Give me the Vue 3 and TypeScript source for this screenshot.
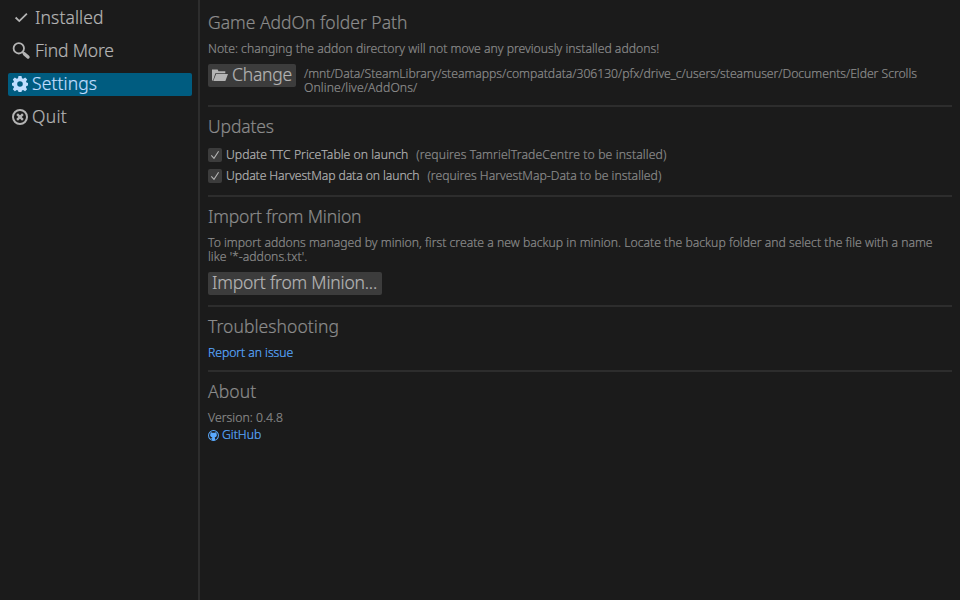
<script setup lang="ts">
import { ref } from 'vue'

type Page = 'installed' | 'find' | 'settings' | 'quit'

const pages: { id: Page; label: string }[] = [
  { id: 'installed', label: 'Installed' },
  { id: 'find', label: 'Find More' },
  { id: 'settings', label: 'Settings' },
  { id: 'quit', label: 'Quit' },
]
const current = ref<Page>('settings')

const updates = ref([
  { id: 'ttc', label: 'Update TTC PriceTable on launch', note: '(requires TamrielTradeCentre to be installed)', on: true },
  { id: 'harvest', label: 'Update HarvestMap data on launch', note: '(requires HarvestMap-Data to be installed)', on: true },
])
</script>

<template>
  <div class="app">
    <nav class="sidebar">
      <button
        v-for="p in pages"
        :key="p.id"
        class="nav"
        :class="[p.id, { active: p.id === current }]"
        @click="current = p.id"
      >
        <svg v-if="p.id === 'installed'" class="icon wide" viewBox="0 0 19 18">
          <path d="M3.6 8.5 7.3 12.1 14.9 4.6" fill="none" stroke="currentColor" stroke-width="1.8" />
        </svg>
        <svg v-else-if="p.id === 'find'" class="icon wide" viewBox="0 0 19 18">
          <circle cx="6.8" cy="6.3" r="5.2" fill="none" stroke="currentColor" stroke-width="1.8" />
          <path d="M10.4 10 12 11.6" stroke="currentColor" stroke-width="1.8" />
          <path d="M12.5 11.9 16 15" stroke="currentColor" stroke-width="3.4" stroke-linecap="round" />
        </svg>
        <svg v-else-if="p.id === 'settings'" class="icon" viewBox="0 0 16 16">
          <path
            fill="currentColor"
            fill-rule="evenodd"
            d="M6.5 0h3l.5 2.2 1.2.5 2-1.2 2 2-1.2 2 .5 1.1 1.5.4v2.6l-1.6.5-.5 1.2 1.2 2-2 2-2-1.2-1.2.5L9.5 16h-3L6 14.6l-1.2-.5-2 1.2-2-2 1.2-2-.5-1.2L0 9.6V7l1.5-.4.5-1.1-1.2-2 2-2 2 1.2L6 2.2ZM8 5.2a2.8 2.8 0 1 0 0 5.6 2.8 2.8 0 0 0 0-5.6Z"
          />
        </svg>
        <svg v-else class="icon" viewBox="0 0 16 16">
          <circle cx="8" cy="8" r="7" fill="none" stroke="currentColor" stroke-width="2" />
          <path d="M5.1 5.1 10.9 10.9M10.9 5.1 5.1 10.9" stroke="currentColor" stroke-width="2.4" />
        </svg>
        <span class="label">{{ p.label }}</span>
      </button>
    </nav>

    <main class="content">
      <section class="folder">
        <h2>Game AddOn folder Path</h2>
        <p>Note: changing the addon directory will not move any previously installed addons!</p>
        <div class="path-row">
          <button class="btn change">
            <svg class="icon" viewBox="0 0 16 16">
              <path fill="currentColor" d="M0 13.6V2.4h5.6l.9 1.8h6.8v2H3.4L1 13.6Z" />
              <path fill="currentColor" d="M4.1 7H16l-2.6 7H1.3Z" />
            </svg>
            <span class="label">Change</span>
          </button>
          <div class="path">/mnt/Data/SteamLibrary/steamapps/compatdata/306130/pfx/drive_c/users/steamuser/Documents/Elder Scrolls Online/live/AddOns/</div>
        </div>
      </section>

      <section class="updates">
        <h2>Updates</h2>
        <label v-for="u in updates" :key="u.id" class="check" :class="u.id">
          <input v-model="u.on" type="checkbox" />
          <span class="box">
            <svg v-if="u.on" viewBox="0 0 14 14">
              <path d="M3.3 7.3 6 10.4 10.6 3.3" fill="none" stroke="currentColor" stroke-width="1.1" />
            </svg>
          </span>
          <span class="name">{{ u.label }}</span>
          <span class="note">{{ u.note }}</span>
        </label>
      </section>

      <section class="import">
        <h2>Import from Minion</h2>
        <p>To import addons managed by minion, first create a new backup in minion. Locate the backup folder and select the file with a name like '*-addons.txt'.</p>
        <button class="btn minion">Import from Minion...</button>
      </section>

      <section class="trouble">
        <h2>Troubleshooting</h2>
        <a class="report">Report an issue</a>
      </section>

      <section class="about">
        <h2>About</h2>
        <p>Version: 0.4.8</p>
        <a class="github">
          <svg viewBox="0 0 12 12">
            <circle cx="6" cy="6" r="5.4" fill="none" stroke="currentColor" stroke-width="1.1" />
            <path
              fill="currentColor"
              d="M2.9 2.3 4.7 3.1H7.3L9.1 2.3 9.4 4.1C10.2 6.3 9.1 7.9 7.3 8.2L7.7 9V11.3H4.3V9.9C3.2 10 2.9 9 2.3 8.7 3.2 8.5 3.5 9.3 4.3 9.2L4.7 8.2C2.9 7.9 1.8 6.3 2.6 4.1Z"
            />
          </svg>
          <span>GitHub</span>
        </a>
      </section>
    </main>
  </div>
</template>

<style>
body {
  background: #1b1b1b;
}
</style>

<style scoped>
.app {
  display: flex;
  box-sizing: border-box;
  width: 960px;
  height: 600px;
  overflow: hidden;
  background: #1b1b1b;
  color: #8c8c8c;
  font: 300 12.2px/14px 'Noto Sans', sans-serif;
  -webkit-text-stroke: 0.2px currentColor;
}
.sidebar {
  display: flex;
  flex-direction: column;
  gap: 10px;
  box-sizing: border-box;
  width: 200px;
  padding: 7px 6px 0 8px;
  border-right: 2px solid #2d2d2d;
}
button {
  border: 0;
  border-radius: 2px;
  font: 300 17.5px/21px 'Noto Sans', sans-serif;
  color: #b4b4b4;
  white-space: nowrap;
}
.nav,
.change {
  display: flex;
  align-items: flex-start;
  gap: 4px;
  height: 23px;
  padding: 0 4px;
}
.nav {
  background: none;
}
.nav.active {
  background: #005c80;
  color: #c0deff;
}
.icon {
  width: 16px;
  height: 16px;
  margin-top: 3px;
  flex: none;
}
.icon.wide {
  width: 19px;
  height: 18px;
  margin-top: 2px;
}
.label {
  letter-spacing: 0.1px;
}
.find .label {
  letter-spacing: -0.15px;
}
.quit .label {
  letter-spacing: 0.3px;
}
.content {
  flex: 1;
  padding: 2px 8px 0;
}
section {
  box-sizing: border-box;
  padding-top: 8px;
  border-bottom: 2px solid #2d2d2d;
}
h2 {
  margin: 0 0 9px;
  font-size: 17.5px;
  font-weight: 300;
  line-height: 22px;
}
p {
  margin: 0;
}
.folder {
  height: 105px;
  padding-top: 9px;
}
.updates {
  height: 90px;
}
.import {
  height: 110px;
}
.trouble {
  height: 65px;
}
.about {
  border: 0;
}
.updates h2 {
  margin-bottom: 11px;
  letter-spacing: -0.12px;
}
.import h2 {
  letter-spacing: -0.17px;
}
.trouble h2 {
  letter-spacing: 0.05px;
}
.about h2 {
  letter-spacing: 0.1px;
}
.path-row {
  display: flex;
  gap: 8px;
  margin-top: 8px;
}
.btn {
  height: 23px;
  background: #3c3c3c;
}
.change {
  width: 88px;
}
.change .label {
  letter-spacing: -0.22px;
}
.path {
  flex: 1;
  padding-top: 3px;
  letter-spacing: 0.1px;
}
.path::first-line {
  letter-spacing: -0.03px;
}
.check {
  display: flex;
  align-items: center;
  height: 14px;
  margin-bottom: 7px;
}
.check input {
  display: none;
}
.box {
  width: 14px;
  height: 14px;
  margin-right: 4px;
  border-radius: 2px;
  background: #3c3c3c;
  color: #b4b4b4;
}
.box svg {
  display: block;
}
.name {
  margin-right: 8px;
  color: #b4b4b4;
  letter-spacing: 0.02px;
}
.harvest .name {
  letter-spacing: -0.09px;
}
.ttc .note {
  letter-spacing: 0.12px;
}
.harvest .note {
  letter-spacing: 0.01px;
}
.import p {
  letter-spacing: 0.01px;
}
.minion {
  display: block;
  width: 173.5px;
  margin-top: 8px;
  padding: 0 4px 2px;
  letter-spacing: -0.2px;
  text-align: left;
}
a {
  color: #5aaaff;
}
.report {
  letter-spacing: -0.05px;
}
.about p {
  letter-spacing: 0.05px;
}
.github {
  display: flex;
  align-items: center;
  gap: 3px;
  margin-top: 3px;
}
.github svg {
  width: 11px;
  height: 11px;
}
</style>
